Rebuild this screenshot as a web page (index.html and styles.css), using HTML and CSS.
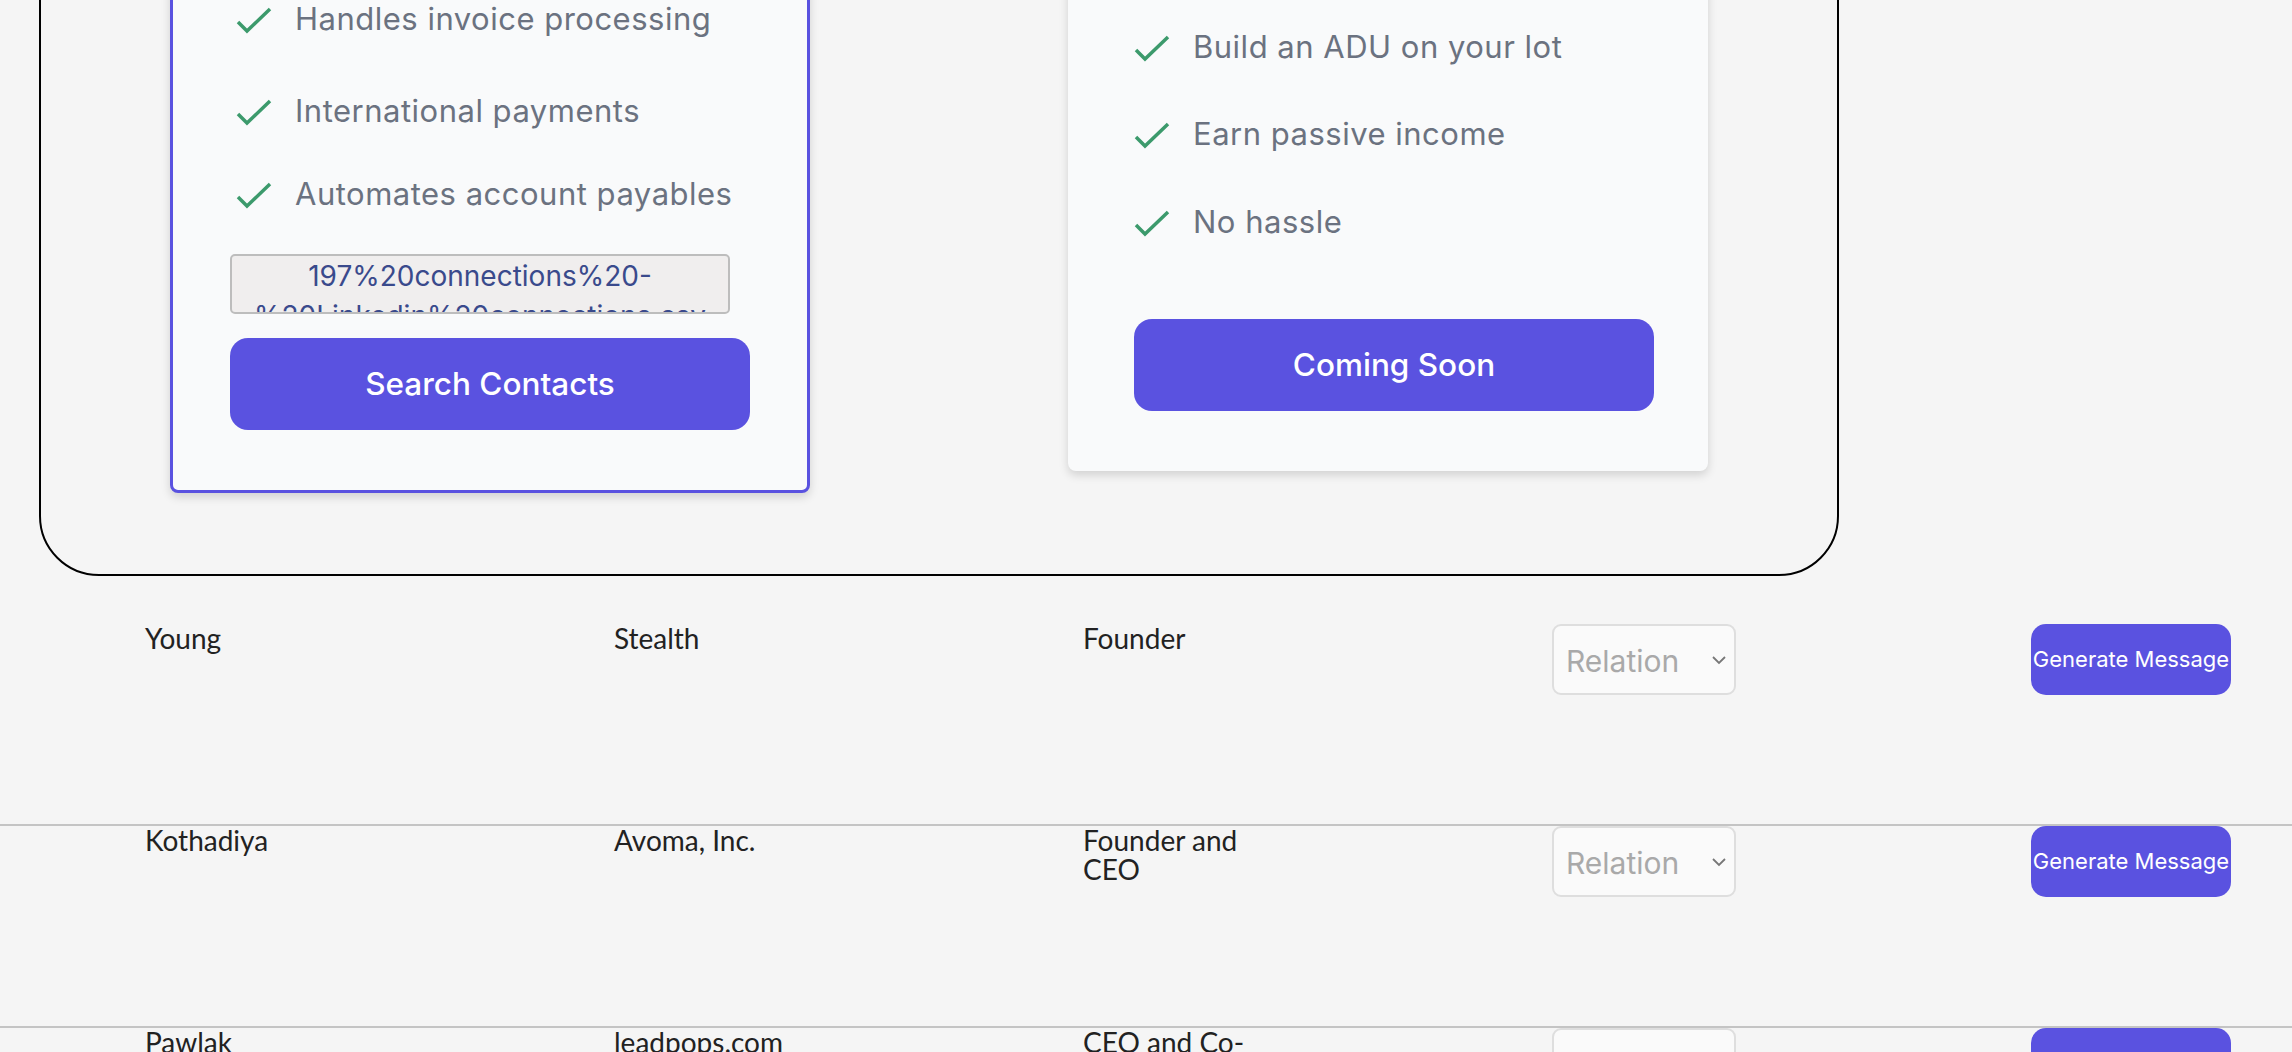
FILE: index.html
```html
<!DOCTYPE html>
<html lang="en">
<head>
    <meta charset="UTF-8">
    <meta name="viewport" content="width=device-width, initial-scale=1.0">
    <title>Contacts</title>
    <link rel="stylesheet" href="styles.css">
</head>
<body>
    <!-- Plans -->
    <section class="plans">
        <div class="plan plan--active">
            <ul class="features features--inset">
                <li>
                    <svg class="check" viewBox="0 0 36 28"><path d="M2 15 L11 24 L34 2"/></svg>
                    <span>Handles invoice processing</span>
                </li>
                <li>
                    <svg class="check" viewBox="0 0 36 28"><path d="M2 15 L11 24 L34 2"/></svg>
                    <span>International payments</span>
                </li>
                <li>
                    <svg class="check" viewBox="0 0 36 28"><path d="M2 15 L11 24 L34 2"/></svg>
                    <span>Automates account payables</span>
                </li>
            </ul>
            <div class="file-name">197%20connections%20-%20Linkedin%20connections.csv</div>
            <button type="button" class="btn">Search Contacts</button>
        </div>

        <div class="plan plan--soon">
            <ul class="features">
                <li>
                    <svg class="check" viewBox="0 0 36 28"><path d="M2 15 L11 24 L34 2"/></svg>
                    <span>Build an ADU on your lot</span>
                </li>
                <li>
                    <svg class="check" viewBox="0 0 36 28"><path d="M2 15 L11 24 L34 2"/></svg>
                    <span>Earn passive income</span>
                </li>
                <li>
                    <svg class="check" viewBox="0 0 36 28"><path d="M2 15 L11 24 L34 2"/></svg>
                    <span>No hassle</span>
                </li>
            </ul>
            <button type="button" class="btn">Coming Soon</button>
        </div>
    </section>

    <!-- Contacts -->
    <div class="contacts">
        <div class="contact-row">
            <div class="cell">Young</div>
            <div class="cell">Stealth</div>
            <div class="cell cell--title">Founder</div>
            <div class="cell">
                <span class="relation">
                    <select><option>Relation</option></select>
                    <svg class="chevron" viewBox="0 0 16 10"><path d="M2 2 L8 8 L14 2"/></svg>
                </span>
            </div>
            <div class="cell"><button type="button" class="gen-btn">Generate Message</button></div>
        </div>
        <div class="contact-row">
            <div class="cell">Kothadiya</div>
            <div class="cell">Avoma, Inc.</div>
            <div class="cell cell--title">Founder and CEO</div>
            <div class="cell">
                <span class="relation">
                    <select><option>Relation</option></select>
                    <svg class="chevron" viewBox="0 0 16 10"><path d="M2 2 L8 8 L14 2"/></svg>
                </span>
            </div>
            <div class="cell"><button type="button" class="gen-btn">Generate Message</button></div>
        </div>
        <div class="contact-row">
            <div class="cell">Pawlak</div>
            <div class="cell">leadpops.com</div>
            <div class="cell cell--title">CEO and Co-Founder</div>
            <div class="cell">
                <span class="relation">
                    <select><option>Relation</option></select>
                    <svg class="chevron" viewBox="0 0 16 10"><path d="M2 2 L8 8 L14 2"/></svg>
                </span>
            </div>
            <div class="cell"><button type="button" class="gen-btn">Generate Message</button></div>
        </div>
    </div>
</body>
</html>
```

FILE: styles.css
```css
html {
    overflow: hidden;
}
body {
    margin: 0;
    background-color: #f5f5f5;
    font-family: Inter, "Noto Sans", sans-serif;
}

/* plans box (page is scrolled, top is above the fold) */
.plans {
    display: flex;
    justify-content: space-around;
    align-items: flex-start;
    width: 1800px;
    box-sizing: border-box;
    margin: -100px 0 0 39px;
    padding: 40px 0 81px;
    border: 2px solid #000;
    border-radius: 60px;
}
.plan {
    width: 640px;
    box-sizing: border-box;
    background-color: #f9fafb;
    border-radius: 8px;
    box-shadow: 0 4px 10px rgba(0, 0, 0, 0.15);
}
.plan--active {
    border: 3px solid #5a52e0;
    padding: 50.6px 57px 60px;
}
.plan--soon {
    padding: 81.6px 54px 60px 66px;
}
.features {
    list-style: none;
    margin: 0;
    padding: 0;
    display: flex;
    flex-direction: column;
    gap: 42.5px;
}
.features--inset {
    padding-left: 6px;
}
.features--inset li:first-child {
    margin-bottom: 4.5px;
}
.features--inset li:nth-child(2) {
    margin-bottom: -4.5px;
}
.features li {
    display: flex;
    align-items: flex-start;
    font-size: 31px;
    letter-spacing: 0.5px;
    line-height: 45px;
    color: #6b7280;
}
.check {
    flex-shrink: 0;
    width: 36px;
    height: 28px;
    margin: 11px 23px 0 0;
    fill: none;
    stroke: #3c9a6c;
    stroke-width: 3.5;
}
.file-name {
    margin-top: 38px;
    width: 500px;
    height: 60px;
    box-sizing: border-box;
    border: 2px solid #bdbdbd;
    border-radius: 5px;
    background-color: #f0eeee;
    color: #3a4a8c;
    font-size: 28px;
    line-height: 40px;
    text-align: center;
    overflow: hidden;
}
.btn {
    display: block;
    width: 520px;
    height: 92px;
    border: none;
    border-radius: 18px;
    background-color: #5a52e0;
    color: #fff;
    font-family: Inter, sans-serif;
    font-size: 31.5px;
    font-weight: 500;
    cursor: pointer;
}
.plan--active .btn {
    margin-top: 24px;
}
.plan--soon .btn {
    margin-top: 75.4px;
}

/* contact rows */
.contacts {
    margin-top: 48px;
}
.contact-row {
    display: grid;
    grid-template-columns: 469px 469px 469px 479px 200px;
    padding-left: 145px;
    height: 200px;
    border-bottom: 2px solid #c4c4c4;
    font-family: Lato, sans-serif;
    font-size: 28px;
    line-height: 29px;
    color: #222;
}
.cell--title {
    max-width: 180px;
}
.relation {
    position: relative;
    display: inline-block;
}
.relation select {
    appearance: none;
    -webkit-appearance: none;
    display: block;
    width: 184px;
    height: 71px;
    padding: 4px 0 0 12px;
    border: 2px solid #dedede;
    border-radius: 9px;
    background-color: #fafafa;
    color: #a9a9a9;
    font-family: Inter, sans-serif;
    font-size: 30px;
}
.chevron {
    position: absolute;
    right: 9px;
    top: 31px;
    width: 16px;
    height: 10px;
    fill: none;
    stroke: #777;
    stroke-width: 1.8;
    pointer-events: none;
}
.gen-btn {
    width: 200px;
    height: 71px;
    padding: 0;
    border: none;
    border-radius: 15px;
    background-color: #5a52e0;
    color: #fff;
    font-family: Inter, sans-serif;
    font-size: 22px;
    white-space: nowrap;
    cursor: pointer;
}
```
